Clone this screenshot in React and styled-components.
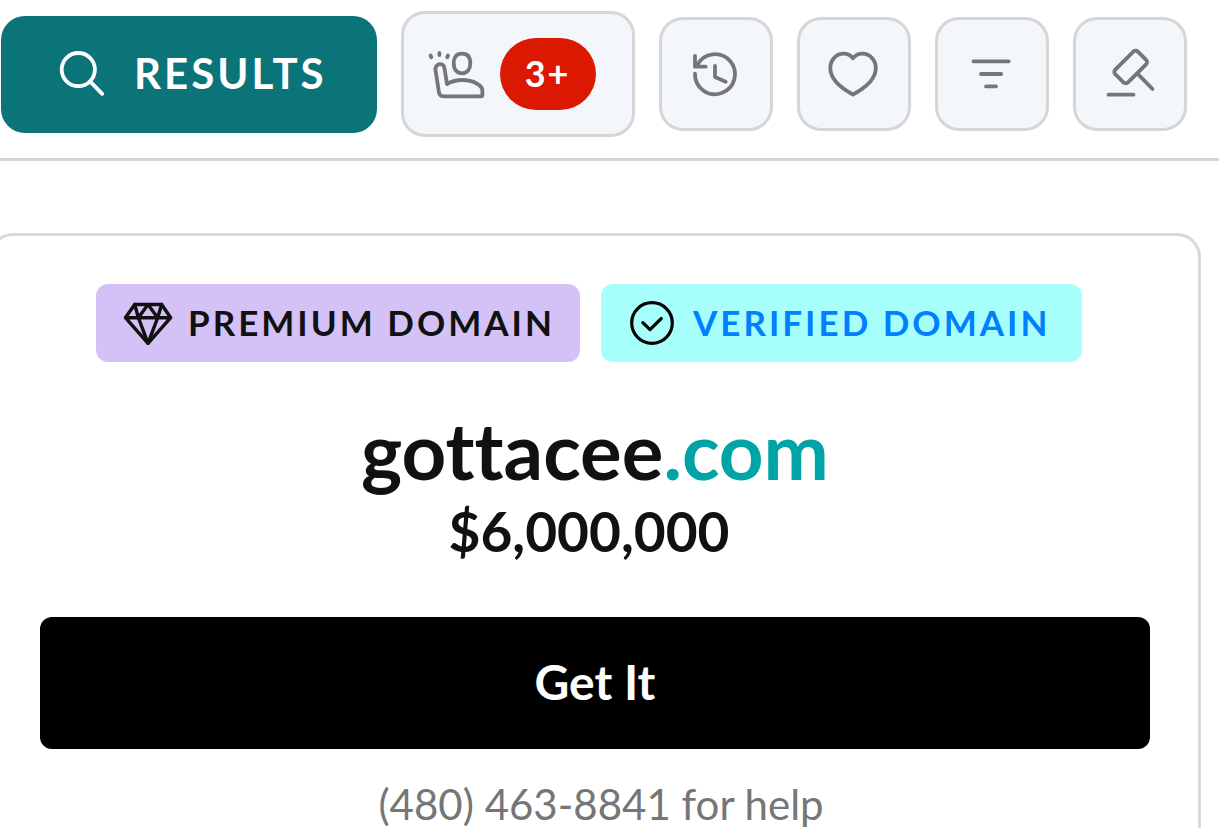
import React from "react";
import styled, { createGlobalStyle } from "styled-components";

const GlobalStyle = createGlobalStyle`
  *, *::before, *::after { box-sizing: border-box; }
  body {
    margin: 0;
    background: #ffffff;
    color: #111111;
    font-family: Lato, "Liberation Sans", sans-serif;
    font-variant-ligatures: none;
    overflow-x: hidden;
  }
  button { font-family: inherit; cursor: pointer; }
`;

const Toolbar = styled.header`
  display: flex;
  align-items: center;
  gap: 24px;
  padding: 11px 0 21px 1px;
  border-bottom: 3px solid #d6d6d6;
`;

const ResultsButton = styled.button`
  display: flex;
  align-items: center;
  gap: 28px;
  height: 117px;
  padding: 0 50px 0 57px;
  border: 0;
  border-radius: 24px;
  background: #0a7479;
  color: #ffffff;
  font-size: 42px;
  font-weight: 700;
  line-height: 48px;
  letter-spacing: 3px;
`;

const ToolButton = styled.button`
  display: flex;
  align-items: center;
  justify-content: center;
  gap: 15px;
  flex: none;
  height: ${(p) => (p.$wide ? "126px" : "114px")};
  min-width: 114px;
  padding: ${(p) => (p.$wide ? "0 36px 0 21px" : "0")};
  border: 3px solid #d6d6d6;
  border-radius: 24px;
  background: #f3f7fc;
  color: #767676;
`;

const Count = styled.span`
  display: flex;
  align-items: center;
  justify-content: center;
  width: 96px;
  height: 72px;
  padding-bottom: 2px;
  border-radius: 36px;
  background: #db1802;
  color: #ffffff;
  font-size: 36px;
  font-weight: 700;
  letter-spacing: 2px;
`;

const Label = styled.span`
  padding-bottom: 2px;
`;

const Icon = styled.svg`
  display: block;
  flex: none;
  fill: none;
  stroke: currentColor;
  stroke-width: ${(p) => p.$stroke || 3.8};
  stroke-linecap: round;
  stroke-linejoin: round;
`;

const Card = styled.main`
  margin: 72px 18px 0 -11px;
  padding: 48px 48px 36px;
  border: 3px solid #d3dbe2;
  border-radius: 24px;
  text-align: center;
`;

const Badges = styled.div`
  display: flex;
  justify-content: center;
  gap: 21px;
  padding-right: 12px;
`;

const Badge = styled.span`
  display: flex;
  align-items: center;
  gap: 14px;
  width: ${(p) => (p.$verified ? "481px" : "484px")};
  height: 78px;
  padding-left: 26px;
  border-radius: 12px;
  background: ${(p) => (p.$verified ? "#a6fffa" : "#d4c2f7")};
  color: ${(p) => (p.$verified ? "#0080ff" : "#111111")};
  font-size: 35px;
  font-weight: 700;
  letter-spacing: 3px;
  white-space: nowrap;

  svg { color: ${(p) => (p.$verified ? "#000000" : "#111111")}; }
`;

const Domain = styled.h1`
  margin: 44px 0 0;
  font-size: 78px;
  font-weight: 700;
  line-height: 88px;
`;

const Extension = styled.span`
  color: #00a4a6;
`;

const Price = styled.p`
  margin: 0;
  padding-right: 12px;
  font-size: 55px;
  font-weight: 700;
  line-height: 74px;
`;

const BuyButton = styled.button`
  display: block;
  width: 100%;
  height: 132px;
  margin-top: 49px;
  padding: 0 0 4px;
  border: 0;
  border-radius: 12px;
  background: #000000;
  color: #ffffff;
  font-size: 48px;
  font-weight: 700;
`;

const Help = styled.p`
  margin: 28px 0 0;
  padding-left: 12px;
  color: #767676;
  font-size: 42px;
  line-height: 54px;

  a { color: inherit; text-decoration: none; }
`;

function SearchIcon() {
  return (
    <Icon width="48" height="48" viewBox="0 0 48 48" aria-hidden="true">
      <circle cx="20.3" cy="19.6" r="16.6" />
      <path d="M32.3 31.6 44.2 43.8" />
    </Icon>
  );
}

function WaveIcon() {
  return (
    <Icon width="60" height="60" viewBox="0 0 60 60" aria-hidden="true">
      <path d="M37 9.6c-5.4 0-8.3 3.5-8.3 9.5 0 6.4 3.1 10.2 8.3 10.2s8.3-3.8 8.3-10.2c0-6-2.9-9.5-8.3-9.5Z" />
      <path d="M10.500 26.200 14 48.500c.4 2.500 1.800 3.800 4.300 3.800H55.800c1 0 1.600-.6 1.600-1.600v-4.200c0-4.700-8.500-10.500-20-10.500-6 0-10.700 1.200-15.400 4l-2.600-16.200c-.5-2.700-2.600-4-5-3.600-2.700.4-4.400 3-3.900 6Z" />
      <path d="m5.600 11.500.7 1.800M14.400 9v2M23 11.500l-.8 1.800" />
    </Icon>
  );
}

function HistoryIcon() {
  return (
    <Icon width="54" height="54" viewBox="0 0 54 54" aria-hidden="true">
      <path d="M6 26.700A20 20 0 1 0 8.300 17.900" />
      <path d="M6 9v10.700h10.700M26 19v11l10.700 4.700" />
    </Icon>
  );
}

function HeartIcon() {
  return (
    <Icon width="54" height="54" viewBox="0 0 54 54" aria-hidden="true">
      <path d="M26 11.300C23.500 8.200 20.200 6.600 16.500 6.700 9 6.900 3.500 12.800 3.300 21 3 33 15.500 41.800 26 47.500 36.500 41.800 49 33 48.800 21 48.600 12.800 43 6.900 35.500 6.700 31.800 6.600 28.500 8.200 26 11.300Z" />
    </Icon>
  );
}

function FilterIcon() {
  return (
    <Icon width="54" height="54" viewBox="0 0 54 54" aria-hidden="true">
      <path d="M8.500 14.400h35.200M16 27h20.200M21 39.400h10" />
    </Icon>
  );
}

function GavelIcon() {
  return (
    <Icon width="54" height="54" viewBox="0 0 54 54" aria-hidden="true">
      <rect x="11.7" y="11" width="32" height="18" rx="3.2" transform="rotate(-45 27.7 20)" />
      <path d="M34.500 26.600 49.500 42M5.500 47.700h25" />
    </Icon>
  );
}

function DiamondIcon() {
  return (
    <Icon $stroke={3.4} width="52" height="48" viewBox="0 0 52 48" aria-hidden="true">
      <path d="M12.700 5.500h26.900l9.100 13.200L26 44.300 3.400 18.700ZM3.400 18.700h45.300" />
      <path d="m12.700 5.500 3.700 13.200L26 5.500l9.700 13.200 3.900-13.200M16.400 18.700 26 44.300l9.700-25.600" />
    </Icon>
  );
}

function CheckIcon() {
  return (
    <Icon $stroke={3.2} width="52" height="48" viewBox="0 0 52 48" aria-hidden="true">
      <circle cx="25" cy="24" r="20.3" />
      <path d="m15.800 23.600 7.200 7L34.300 19.500" />
    </Icon>
  );
}

export default function App() {
  return (
    <>
      <GlobalStyle />
      <Toolbar>
        <ResultsButton type="button">
          <SearchIcon />
          <Label>RESULTS</Label>
        </ResultsButton>
        <ToolButton type="button" $wide aria-label="Assistance, 3+ new">
          <WaveIcon />
          <Count>3+</Count>
        </ToolButton>
        <ToolButton type="button" aria-label="History">
          <HistoryIcon />
        </ToolButton>
        <ToolButton type="button" aria-label="Favorites">
          <HeartIcon />
        </ToolButton>
        <ToolButton type="button" aria-label="Filter">
          <FilterIcon />
        </ToolButton>
        <ToolButton type="button" aria-label="Auctions">
          <GavelIcon />
        </ToolButton>
      </Toolbar>
      <Card>
        <Badges>
          <Badge>
            <DiamondIcon />
            <Label>PREMIUM DOMAIN</Label>
          </Badge>
          <Badge $verified>
            <CheckIcon />
            <Label>VERIFIED DOMAIN</Label>
          </Badge>
        </Badges>
        <Domain>
          gottacee<Extension>.com</Extension>
        </Domain>
        <Price>$6,000,000</Price>
        <BuyButton type="button">Get It</BuyButton>
        <Help>
          <a href="tel:+14804638841">(480) 463-8841</a> for help
        </Help>
      </Card>
    </>
  );
}
